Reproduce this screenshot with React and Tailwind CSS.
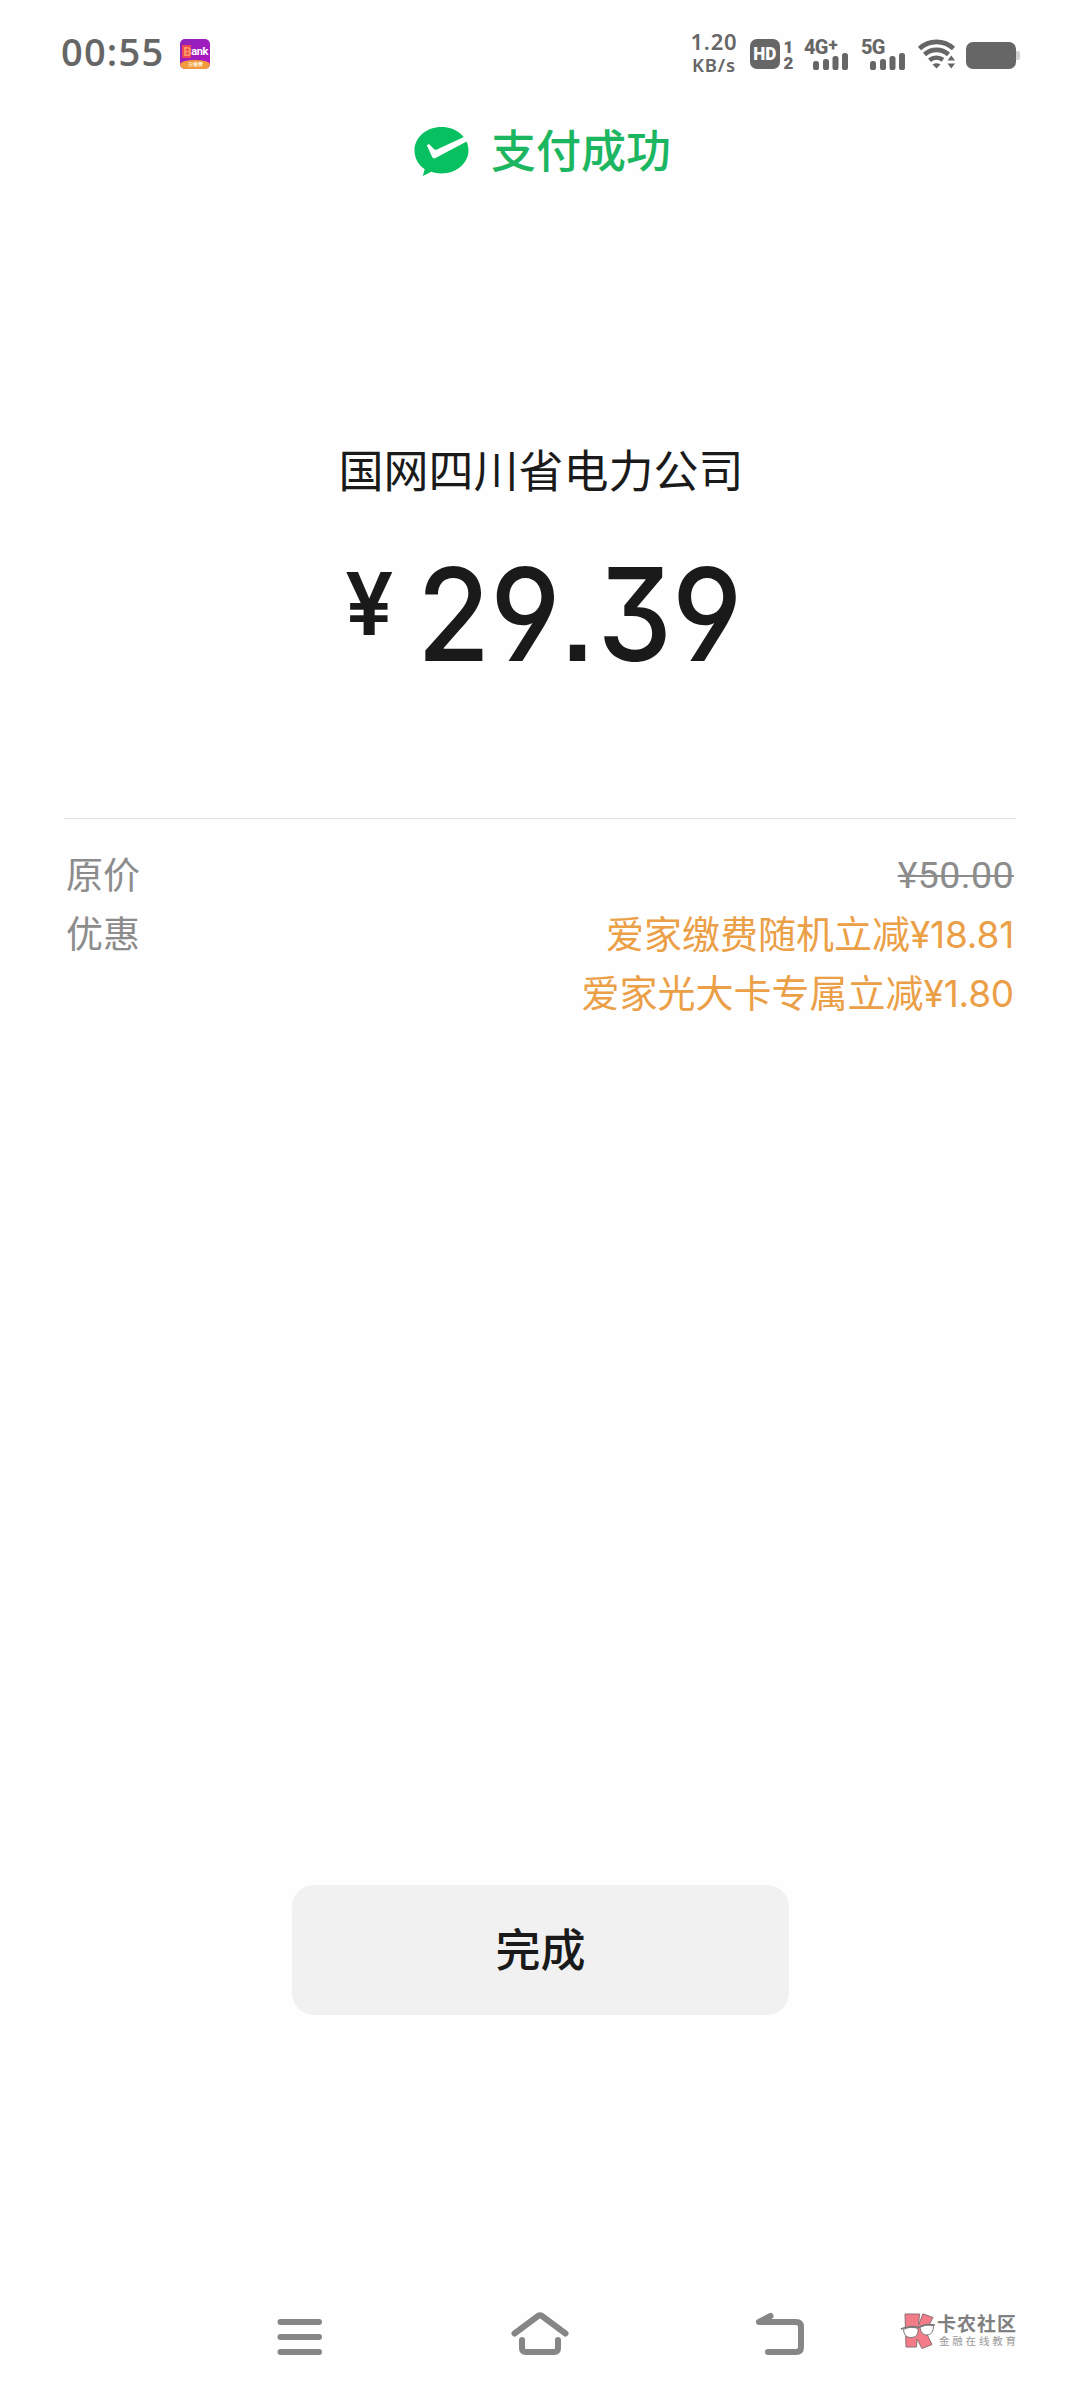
import React from 'react';

const discounts = [
  { name: '爱家缴费随机立减', amount: '¥18.81' },
  { name: '爱家光大卡专属立减', amount: '¥1.80' },
];

const SignalBars = () => (
  <svg viewBox="0 0 36 17" className="w-[36px] h-[17px]" fill="#666">
    <rect x="0" y="8" width="6" height="9" rx="2.6" />
    <rect x="10" y="6" width="6" height="11" rx="2.6" />
    <rect x="19.500" y="3" width="6" height="14" rx="2.6" />
    <rect x="29" y="0" width="6" height="17" rx="2.6" />
  </svg>
);

const Network = ({ label, plus }) => (
  <div className="w-[45px] h-[31px] flex flex-col">
    <div className="h-[14px] flex items-start font-extrabold whitespace-nowrap">
      <span className="text-[20px] leading-[16px] tracking-[-0.8px]">{label}</span>
      {plus && <span className="ml-px text-[17px] leading-[10px]">+</span>}
    </div>
    <div className="pl-[9px] h-[17px]">
      <SignalBars />
    </div>
  </div>
);

const BankIcon = () => (
  <div className="w-[30px] h-[30px] ml-[16px] mt-[3px] rounded-[5px] overflow-hidden bg-gradient-to-br from-[#8e22b8] to-[#b014c4] flex flex-col justify-between font-['Roboto',sans-serif]">
    <div className="pt-[6px] pl-[2px] flex items-center text-[11px] leading-[13px] font-bold text-white tracking-[-0.5px]">
      <span className="w-[9px] bg-[#ef4358] text-[#ff9b62] text-[13px] pl-px">B</span>
      <span>ank</span>
    </div>
    <div className="h-[9px] rounded-t-[50%] bg-[#f29a3c] text-[#fff3dc] text-center text-[5px] leading-[9px] font-bold">云缴费</div>
  </div>
);

const StatusBar = () => (
  <header className="h-[96px] pl-[61px] pr-[60px] pt-[36px] flex items-start justify-between text-[#666]">
    <div className="flex items-start">
      <span className="-mt-px text-[38px] leading-[32px] font-semibold tracking-[1.2px] font-['Open_Sans','Noto_Sans',sans-serif]">00:55</span>
      <BankIcon />
    </div>
    <div className="flex items-start pt-[3px] font-['Roboto',sans-serif]">
      <div className="w-[46px] -mt-[9px] mr-[13px] flex flex-col items-center font-['Noto_Sans',sans-serif]">
        <span className="text-[22px] leading-[23px] font-semibold tracking-[0.8px]">1.20</span>
        <span className="text-[18.500px] leading-[23px] font-semibold tracking-[0.8px]">KB/s</span>
      </div>
      <div className="w-[30px] h-[30px] rounded-[7px] bg-[#666] flex items-center justify-center text-white text-[19px] font-black">
        <span className="scale-x-90">HD</span>
      </div>
      <div className="w-[13px] ml-[2px] mr-[9px] flex flex-col items-center text-[17px] leading-[16px] font-black">
        <span>1</span>
        <span>2</span>
      </div>
      <Network label="4G" plus />
      <div className="w-[12px]" />
      <Network label="5G" />
      <svg viewBox="0 0 38 30" className="w-[38px] h-[30px] ml-[12px]" fill="none" stroke="#666">
        <path d="M1.500 9.500a25 25 0 0 1 34 0" strokeWidth="4.600" />
        <path d="M6.500 15.500a18 18 0 0 1 24 0" strokeWidth="4.600" />
        <path d="M11.500 21.300a11 11 0 0 1 13.500-.5" strokeWidth="4.600" />
        <path d="M14.500 25.500q4-2.500 8 0l-4 4z" fill="#666" stroke="none" />
        <path d="M29.500 21.500l3.800-5 3.800 5zM29.500 24.500l3.800 5 3.800-5z" fill="#666" stroke="none" />
      </svg>
      <div className="ml-[10px] mt-[3px] flex items-center">
        <div className="w-[50px] h-[27px] rounded-[7px] bg-[#666]" />
        <div className="w-[4px] h-[9px] rounded-r-[2px] bg-[#d0d0d0]" />
      </div>
    </div>
  </header>
);

const PaidIcon = () => (
  <svg viewBox="0 0 55 50" className="w-[55px] h-[50px]">
    <path
      d="M27.500 0C12.500 0 .5 10.300.5 23.500c0 7.800 4 14.500 10.200 18.800L8.800 49l8.500-4.200c3.200 1 6.600 1.600 10.200 1.600 15 0 27-10.300 27-23.200S42.500 0 27.500 0z"
      fill="#07c160"
    />
    <path d="M12.800 18.200l2.200-1.200 5.200 5.200c.8.600 1.600.7 2.700.2L51.500 9.200l3 4.300L21.500 31c-1.600.8-2.600.3-3.300-1z" fill="#fff" />
  </svg>
);

const Label = ({ children }) => <span className="text-[37px] leading-[59px] text-[#8c8c8c]">{children}</span>;

const Watermark = () => (
  <div className="flex items-start">
    <svg viewBox="0 0 36 36" className="w-[36px] h-[36px]">
      <path d="M5 1h14.500l-1 11L23 .8l10 3.700-7.500 14L32 31.500 22 35.500l-5-9.500-.5 8H6z" fill="#f37c88" stroke="#8b6f74" />
      <path d="M3.500 16.500q7-4 14.500-1c.5 6-2 9-7 9s-7-3-7.500-8zM20 14q6-3.500 13.500-1.500c0 6-2.500 9.500-6.500 9.500s-6.500-3-7-8z" fill="#fff" stroke="#777" />
      <path d="M.8 16q9-4 17.500-1.500Q25 10.500 35 12" fill="none" stroke="#777" strokeWidth="1.500" />
    </svg>
    <div className="ml-[1px] flex flex-col whitespace-nowrap">
      <span className="text-[19px] leading-[19px] font-bold tracking-[1px] text-[#808080]">卡农社区</span>
      <span className="pl-[2px] mt-[3px] text-[10.500px] leading-[12px] tracking-[2.800px] text-[#999]">金融在线教育</span>
    </div>
  </div>
);

const NavBar = () => (
  <nav className="h-[130px] pt-[41px] pl-[276px] flex items-start">
    <svg viewBox="0 0 46 46" className="w-[46px] h-[46px]" fill="none" stroke="#868686" strokeWidth="6" strokeLinecap="round">
      <path d="M4.500 11h38.500M4.500 26h38.500M4.500 41h38.500" />
    </svg>
    <svg viewBox="0 0 60 46" className="w-[60px] h-[46px] ml-[188px]" fill="none" stroke="#868686" strokeWidth="6" strokeLinecap="round" strokeLinejoin="round">
      <path d="M4.500 22.500L28 5q2-1.500 4 0l23.500 17.500" />
      <path d="M12 29v8q0 4 4 4h28q4 0 4-4v-8" />
    </svg>
    <svg viewBox="0 0 50 46" className="w-[50px] h-[46px] ml-[185px]" fill="none" stroke="#868686" strokeWidth="6" strokeLinecap="round" strokeLinejoin="round">
      <path d="M15.500 5L4 11h37q5 0 5 5v20q0 5-5 5H13" />
      <path d="M4 11l11.500-6-3 6z" fill="#868686" strokeWidth="2" />
    </svg>
    <div className="ml-[95px] mt-[2px]">
      <Watermark />
    </div>
  </nav>
);

const App = () => {
  return (
    <div className="w-[1080px] h-[2400px] flex flex-col bg-[#fefefe] font-['Noto_Sans_CJK_SC',sans-serif]">
      <StatusBar />

      <div className="h-[110px] pl-[5px] flex items-start justify-center gap-[22px]">
        <div className="pt-[31px]">
          <PaidIcon />
        </div>
        <h1 className="pt-[23px] text-[45px] leading-[60px] font-medium text-[#1cb661]">支付成功</h1>
      </div>

      <section className="h-[612px] pt-[233px] flex flex-col items-center text-[#1a1a1a]">
        <p className="pl-[2px] text-[45px] leading-[60px]">国网四川省电力公司</p>
        <div className="w-[390px] mt-[60px] flex items-start font-['Inter',sans-serif]">
          <span className="w-[72px] text-[86px] leading-[90px] font-semibold">¥</span>
          <span className="w-[318px] origin-left scale-x-[.92] whitespace-nowrap text-[129px] leading-[110px] font-[550] tracking-[0px] [font-feature-settings:'cv04','cv09','ss07']">
            29<span className="-ml-[1px] mr-[2px]">.</span>39
          </span>
        </div>
      </section>

      <section className="mx-[64px] border-t border-[#dedede] pt-[25px] px-[2px]">
        <div className="flex items-start justify-between">
          <Label>原价</Label>
          <span className="pt-[3px] text-[37.500px] leading-[56px] tracking-[0.4px] text-[#8c8c8c] line-through decoration-2 font-['Roboto',sans-serif]">¥50.00</span>
        </div>
        <div className="flex items-start justify-between">
          <Label>优惠</Label>
          <div className="-mt-px flex flex-col items-end">
            {discounts.map((item) => (
              <p key={item.name} className="h-[59px] text-[38px] leading-[59px] text-[#eb9f46]">
                {item.name}
                <span className="font-['Inter',sans-serif] text-[37px] tracking-[-0.2px]">{item.amount}</span>
              </p>
            ))}
          </div>
        </div>
      </section>

      <div className="flex-1" />
      <button className="w-[497px] h-[130px] mb-[255px] pb-[4px] pl-px self-center rounded-[22px] bg-[#f1f1f1] text-[45px] font-medium text-[#1a1a1a]">完成</button>
      <NavBar />
    </div>
  );
};

export default App;
